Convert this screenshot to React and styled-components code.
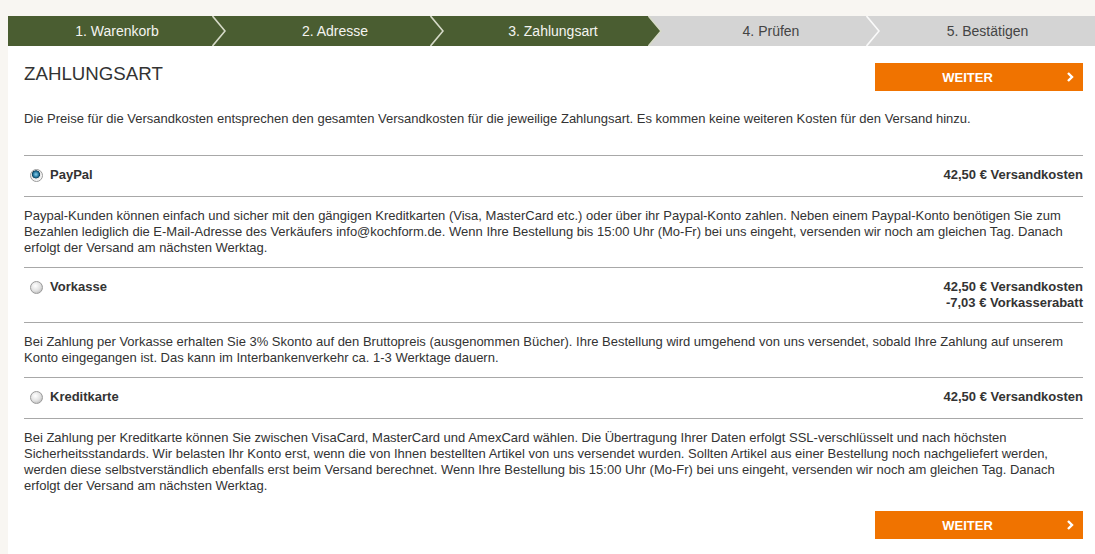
import styled, { createGlobalStyle } from 'styled-components'

const GlobalStyle = createGlobalStyle`
    body {
        margin: 0;
        background: #f8f6f2;
        font-family: "Liberation Sans", Arial, sans-serif;
        color: #333;
    }
`;

const Page = styled.div`
    padding: 16px 0 0 8px;
`;

const Steps = styled.div`
    display: flex;
    height: 30px;
    overflow: hidden;
`;

const Step = styled.div`
    position: relative;
    flex: ${(p) => (p.$end ? '1 0 auto' : '0 0 218px')};
    display: flex;
    align-items: center;
    justify-content: center;
    font-size: 14px;
    background: ${(p) => (p.$done ? '#4a5d31' : '#d4d4d4')};
    color: ${(p) => (p.$done ? '#f4f4f0' : '#444')};
`;

const Chevron = styled.svg`
    position: absolute;
    top: 0;
    right: 0;
`;

const Content = styled.div`
    background: #fff;
    padding: 0 12px 30px 16px;
`;

const Head = styled.div`
    display: flex;
    justify-content: space-between;
    align-items: flex-start;
    padding-top: 17px;
`;

const Title = styled.h1`
    margin: 0;
    font-size: 18.7px;
    font-weight: normal;
    color: #333;
    line-height: 22px;
`;

const Button = styled.button`
    width: 208px;
    height: 28px;
    border: none;
    background: #f07300;
    color: #fff;
    font-family: "Liberation Sans", Arial, sans-serif;
    font-weight: bold;
    font-size: 13px;
    display: flex;
    align-items: center;
    justify-content: center;
    position: relative;
    cursor: pointer;
    padding: 0 23px 0 0;
    margin-top: ${(p) => p.$top || 0}px;
`;

const Arrow = styled.svg`
    position: absolute;
    right: 9px;
    top: 9px;
`;

const Intro = styled.p`
    margin: 20px 0 28px;
    font-size: 13px;
    line-height: 16px;
`;

const Row = styled.div`
    display: flex;
    justify-content: space-between;
    align-items: flex-start;
    border-top: 1px solid #a8a8a8;
    padding: 11px 0;
    min-height: 18px;
    font-size: 13px;
    line-height: 16px;
    font-weight: bold;
`;

const Label = styled.label`
    display: flex;
    align-items: center;
    gap: 7px;
    padding-left: 6px;
`;

const Radio = styled.span`
    width: 13px;
    height: 13px;
    border-radius: 50%;
    box-sizing: border-box;
    border: 1px solid #9a9a9a;
    background: ${(p) =>
        p.$on
            ? 'radial-gradient(circle at 45% 40%, #8fd0ea 0, #2a7ea6 2.5px, #0d3f5a 3.8px, #e6e6e6 4.3px, #f6f6f6 6px)'
            : 'radial-gradient(circle at 40% 35%, #ffffff 0, #e2e2e2 5px, #c8c8c8 7px)'};
`;

const Price = styled.div`
    text-align: right;
`;

const Desc = styled.p`
    margin: 0;
    border-top: 1px solid #a8a8a8;
    padding: 11px 0;
    font-size: 13px;
    line-height: 16px;
`;

const Footer = styled.div`
    display: flex;
    justify-content: flex-end;
`;

const GREEN = '#4a5d31';
const GREY = '#d4d4d4';

const steps = [
    { name: '1. Warenkorb', done: true },
    { name: '2. Adresse', done: true },
    { name: '3. Zahlungsart', done: true },
    { name: '4. Prüfen' },
    { name: '5. Bestätigen' },
];

const methods = [
    {
        name: 'PayPal',
        checked: true,
        price: ['42,50 € Versandkosten'],
        text: 'Paypal-Kunden können einfach und sicher mit den gängigen Kreditkarten (Visa, MasterCard etc.) oder über ihr Paypal-Konto zahlen. Neben einem Paypal-Konto benötigen Sie zum Bezahlen lediglich die E-Mail-Adresse des Verkäufers info@kochform.de. Wenn Ihre Bestellung bis 15:00 Uhr (Mo-Fr) bei uns eingeht, versenden wir noch am gleichen Tag. Danach erfolgt der Versand am nächsten Werktag.',
    },
    {
        name: 'Vorkasse',
        price: ['42,50 € Versandkosten', '-7,03 € Vorkasserabatt'],
        text: 'Bei Zahlung per Vorkasse erhalten Sie 3% Skonto auf den Bruttopreis (ausgenommen Bücher). Ihre Bestellung wird umgehend von uns versendet, sobald Ihre Zahlung auf unserem Konto eingegangen ist. Das kann im Interbankenverkehr ca. 1-3 Werktage dauern.',
    },
    {
        name: 'Kreditkarte',
        price: ['42,50 € Versandkosten'],
        text: 'Bei Zahlung per Kreditkarte können Sie zwischen VisaCard, MasterCard und AmexCard wählen. Die Übertragung Ihrer Daten erfolgt SSL-verschlüsselt und nach höchsten Sicherheitsstandards. Wir belasten Ihr Konto erst, wenn die von Ihnen bestellten Artikel von uns versendet wurden. Sollten Artikel aus einer Bestellung noch nachgeliefert werden, werden diese selbstverständlich ebenfalls erst beim Versand berechnet. Wenn Ihre Bestellung bis 15:00 Uhr (Mo-Fr) bei uns eingeht, versenden wir noch am gleichen Tag. Danach erfolgt der Versand am nächsten Werktag.',
    },
];

const WeiterArrow = () => (
    <Arrow width="7" height="10" viewBox="0 0 7 10">
        <path d="M1 1 L5 5 L1 9" fill="none" stroke="#fff" strokeWidth="2.4" />
    </Arrow>
);

const App = () => {
    return (
        <Page>
            <GlobalStyle />
            <Steps>
                {steps.map((s, i) => {
                    const next = steps[i + 1]
                    return (
                        <Step key={s.name} $done={s.done} $end={!next}>
                            {s.name}
                            {next && (
                                <Chevron width="14" height="30" viewBox="0 0 14 30">
                                    <rect x="0" y="0" width="14" height="30" fill={next.done ? GREEN : GREY} />
                                    <path d="M0 0 L13 15 L0 30 Z" fill={s.done ? GREEN : GREY} />
                                    <path
                                        d="M0.5 0 L13 15 L0.5 30"
                                        fill="none"
                                        stroke={s.done ? '#d6dac8' : '#fafafa'}
                                        strokeWidth="1.6"
                                    />
                                </Chevron>
                            )}
                        </Step>
                    )
                })}
            </Steps>
            <Content>
                <Head>
                    <Title>ZAHLUNGSART</Title>
                    <Button>
                        WEITER
                        <WeiterArrow />
                    </Button>
                </Head>
                <Intro>
                    Die Preise für die Versandkosten entsprechen den gesamten Versandkosten für die jeweilige Zahlungsart. Es kommen keine weiteren Kosten für den Versand hinzu.
                </Intro>
                {methods.map((m) => (
                    <div key={m.name}>
                        <Row>
                            <Label>
                                <Radio $on={m.checked} />
                                {m.name}
                            </Label>
                            <Price>
                                {m.price.map((p) => (
                                    <div key={p}>{p}</div>
                                ))}
                            </Price>
                        </Row>
                        <Desc>{m.text}</Desc>
                    </div>
                ))}
                <Footer>
                    <Button $top={6}>
                        WEITER
                        <WeiterArrow />
                    </Button>
                </Footer>
            </Content>
        </Page>
    )
}

export default App
